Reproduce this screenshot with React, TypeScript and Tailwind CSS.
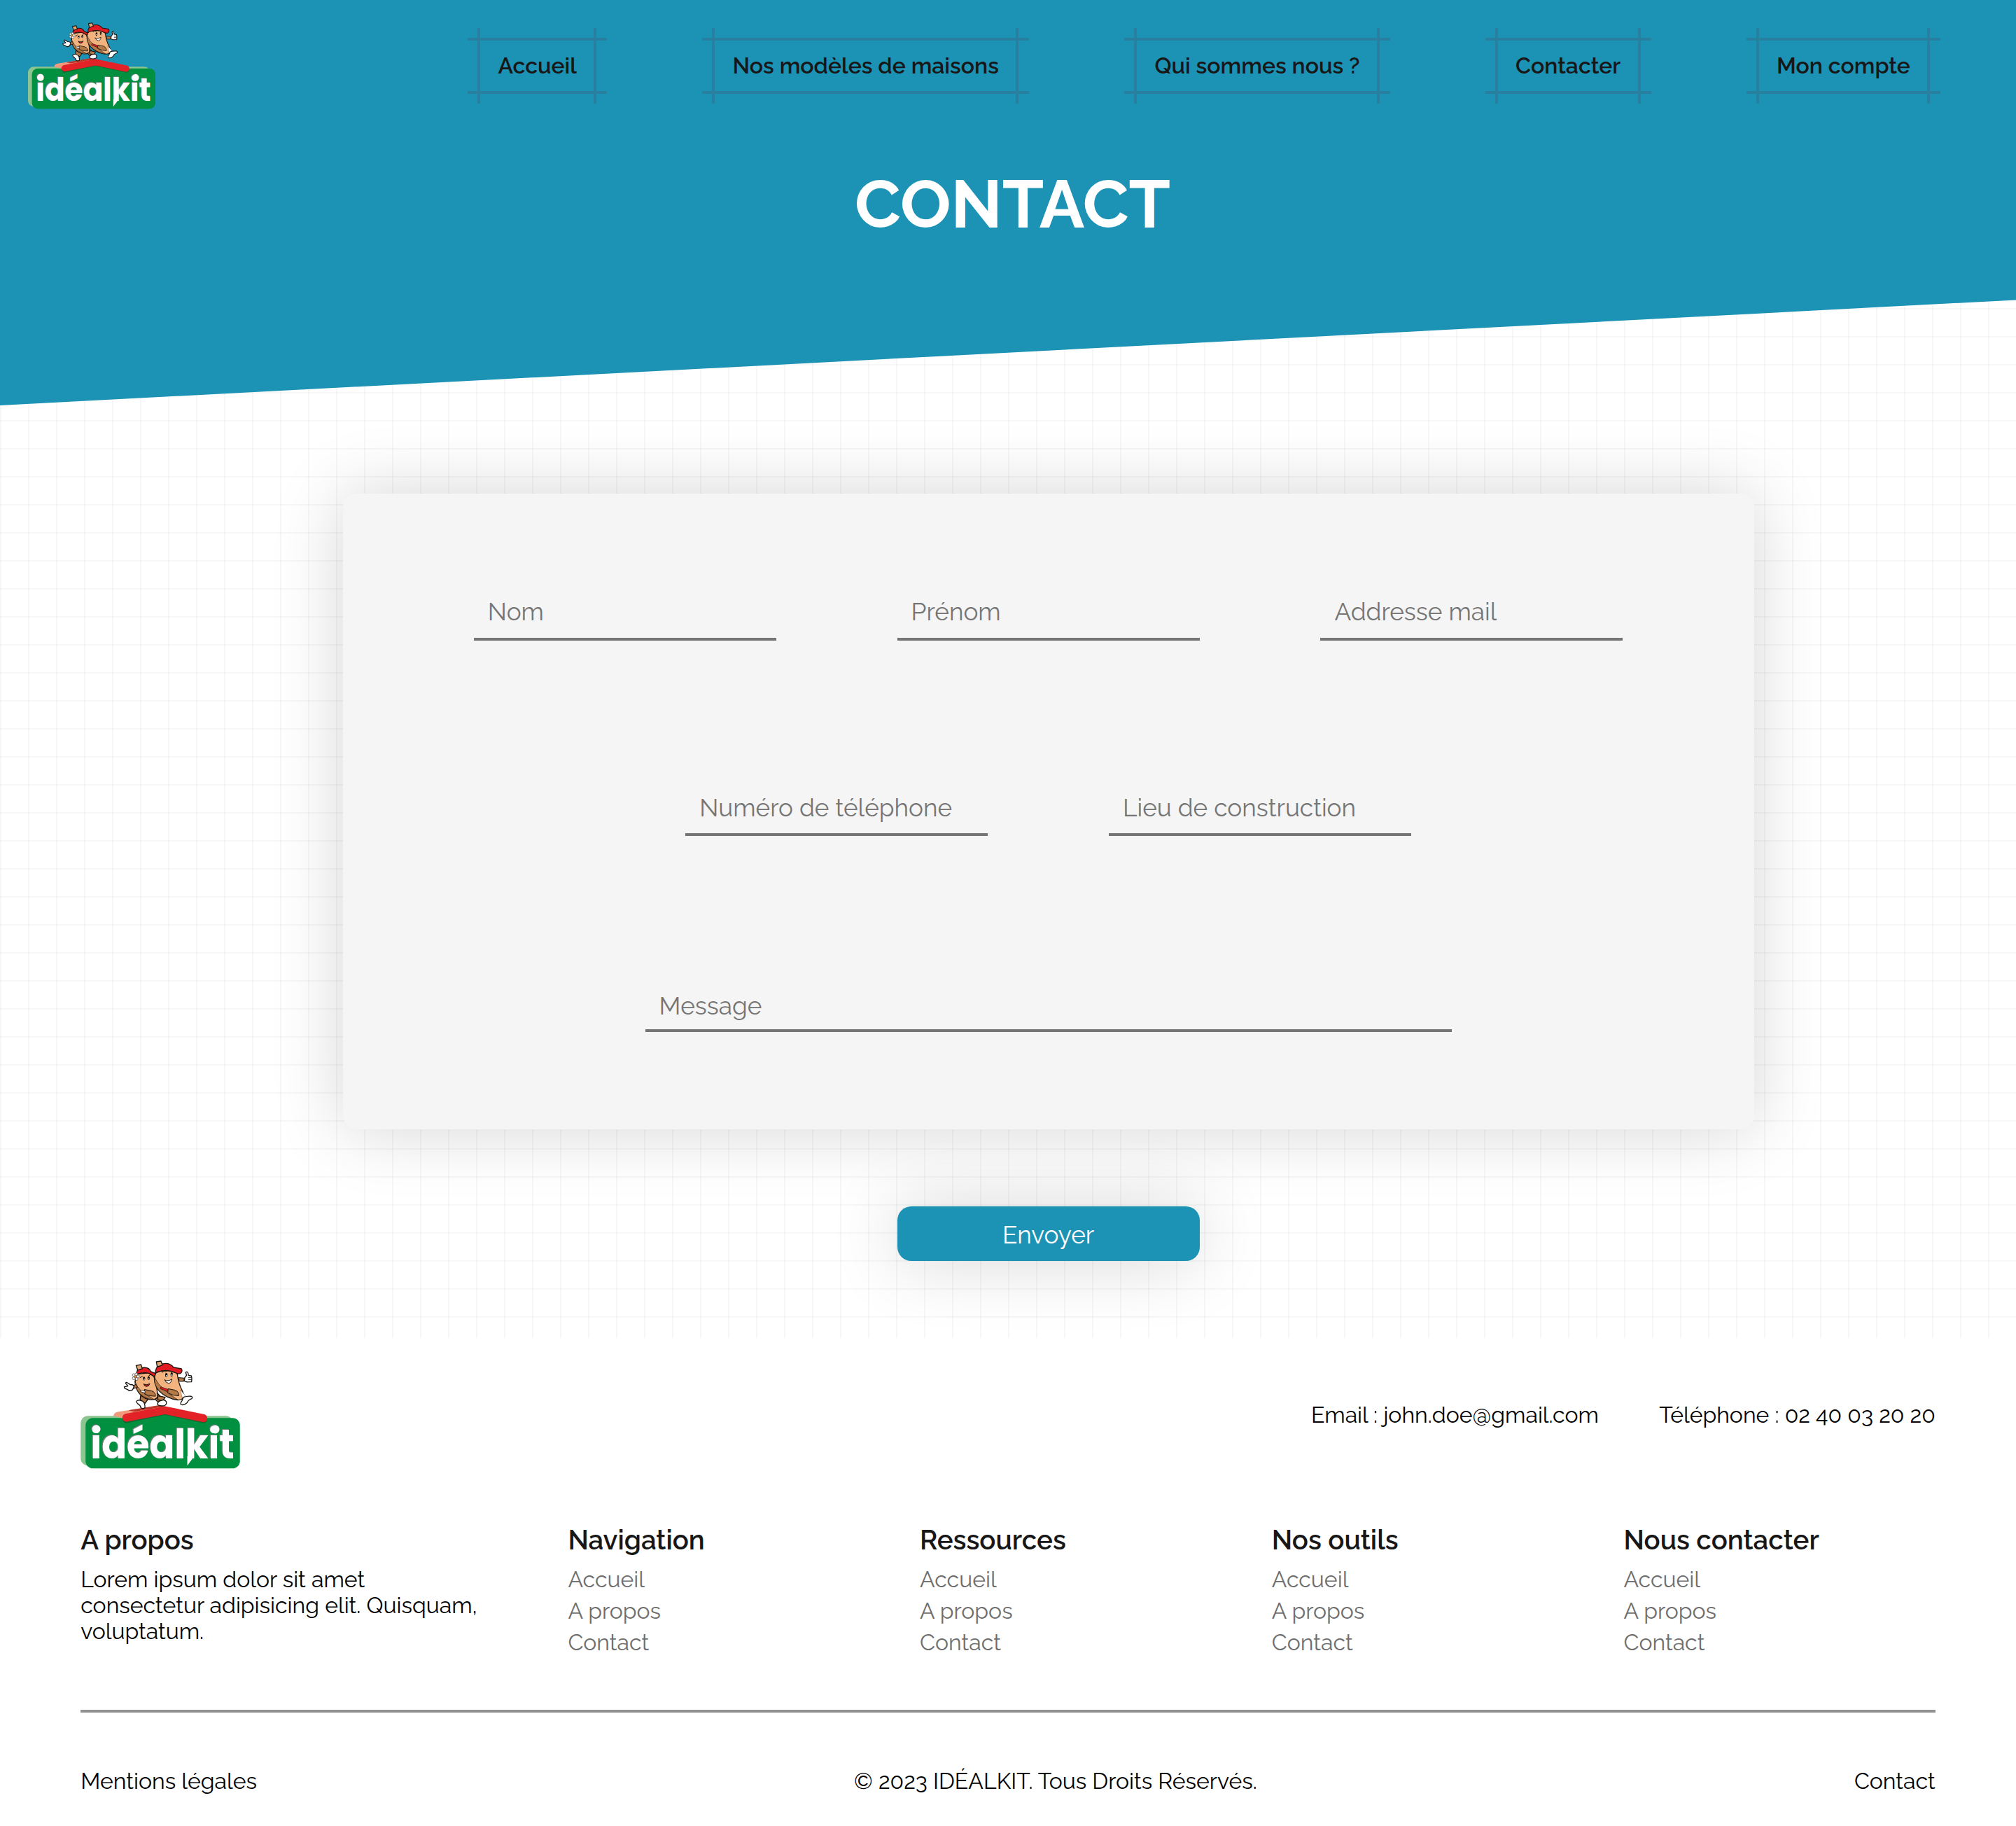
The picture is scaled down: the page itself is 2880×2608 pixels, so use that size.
const navLinks = ["Accueil", "Nos modèles de maisons", "Qui sommes nous ?", "Contacter", "Mon compte"];
const footerColumns = ["Navigation", "Ressources", "Nos outils", "Nous contacter"];
const footerLinks = ["Accueil", "A propos", "Contact"];

function Logo({ className }: { className: string }) {
  return (
    <svg viewBox="45 38 684 466" className={className} role="img" aria-label="idéalkit">
      {/* sign */}
      <rect x="45" y="276" width="655" height="214" rx="32" fill="#8dc591" />
      <rect x="66" y="285" width="663" height="217" rx="32" fill="#00903f" />
      {/* roof */}
      <path d="M186 276 Q188 262 204 259 L385 231 L408 236 L408 250 L226 286 L190 278 Z" fill="#f09a7c" />
      <path d="M250 252 L378 231 L405 236 L275 258 Z" fill="#b5362b" />
      <path d="M290 292 L407 258 L520 292 Z" fill="#00903f" />
      <path d="M240 293 L407 258 L574 293" fill="none" stroke="#0b6b33" strokeWidth="28" strokeLinecap="round" />
      <path d="M241 284 L407 252 L572 286" fill="none" stroke="#e32227" strokeWidth="34" strokeLinecap="round" strokeLinejoin="miter" />

      {/* left character */}
      <g stroke="#17100c" strokeWidth="4" strokeLinejoin="round" strokeLinecap="round">
        <path d="M303 188 L300 208 L322 222 L336 202 Z" fill="#b37a48" />
        <path d="M350 190 L378 218 L398 204 L372 176 Z" fill="#b37a48" />
        <path d="M290 210 Q280 214 290 224 Q303 232 303 241 Q313 248 321 241 Q322 222 312 214 Q300 206 290 210 Z" fill="#fff" />
        <path d="M285 97 Q274 130 284 158 Q300 198 340 206 Q366 210 376 194 Q374 160 366 130 Q360 104 352 90 Z" fill="#f2b37f" />
        <path d="M278 128 Q278 160 302 184 Q330 206 362 206 Q330 190 306 170 Q286 152 278 128 Z" fill="#b37a48" strokeWidth="2" />
        <path d="M320 163 L350 169 Q368 176 366 192 Q340 192 322 184 Z" fill="#b37a48" strokeWidth="3" />
        <path d="M304 166 L322 170 L321 178 L302 172 Z" fill="#fff" strokeWidth="2" />
        <path d="M285 98 Q285 76 306 70 Q338 64 346 86 L366 94 Q372 104 358 106 L340 94 Q314 86 285 98 Z" fill="#e21b23" />
        <path d="M283 60 L304 56 L310 74 L290 80 Z" fill="#e0a878" />
        <path d="M282 142 L264 148 L268 160 L288 154 Z" fill="#b37a48" strokeWidth="3" />
        <path d="M232 152 L248 148 L238 136 Q240 130 246 134 L258 142 Q270 140 274 150 L268 164 Q256 172 248 164 L234 158 Z" fill="#fff" />
        <path d="M316 140 Q328 146 342 138 Q338 150 328 150 Q318 150 316 140 Z" fill="#c41a20" strokeWidth="3" />
        <path d="M310 106 L300 112 M338 104 L346 98" strokeWidth="3" fill="none" />
      </g>
      <g fill="#fff" stroke="#4a3a30" strokeWidth="2">
        <circle cx="273" cy="101" r="6" />
        <circle cx="284" cy="98" r="6" />
        <circle cx="291" cy="107" r="6" />
        <circle cx="285" cy="118" r="6" />
        <circle cx="273" cy="115" r="6" />
        <circle cx="280" cy="108" r="5" fill="#f2a33b" />
      </g>
      <ellipse cx="317" cy="116" rx="5" ry="8" fill="#17100c" />
      <ellipse cx="337" cy="114" rx="5" ry="8" fill="#17100c" />
      <circle cx="318" cy="119" r="2.5" fill="#fff" />
      <circle cx="338" cy="117" r="2.5" fill="#fff" />

      {/* right character */}
      <g stroke="#17100c" strokeWidth="4" strokeLinejoin="round" strokeLinecap="round">
        <path d="M376 190 L376 206 L396 214 L408 196 Z" fill="#b37a48" />
        <path d="M382 214 Q404 202 412 214 Q416 226 406 232 Q386 236 376 228 Q374 220 382 214 Z" fill="#fff" />
        <path d="M367 94 Q354 124 372 156 Q394 190 440 204 Q466 212 480 204 Q492 190 482 170 Q464 136 460 96 Q450 78 380 82 Z" fill="#f2b37f" />
        <path d="M363 112 Q358 140 380 166 Q412 200 462 207 Q424 184 400 160 Q376 140 363 112 Z" fill="#b37a48" strokeWidth="2" />
        <path d="M474 166 L494 188 L484 206 Q478 192 474 166 Z" fill="#fff" strokeWidth="1" />
        <path d="M422 160 L452 166 Q468 174 466 190 Q440 190 420 178 Z" fill="#b37a48" strokeWidth="3" />
        <path d="M390 152 L420 162 L418 172 L388 160 Z" fill="#d81d24" strokeWidth="2" />
        <path d="M486 196 Q502 190 520 192 Q528 196 522 202 Q506 208 502 220 Q490 232 476 228 Q472 220 480 212 Z" fill="#fff" />
        <path d="M366 92 Q366 66 386 56 Q424 42 444 68 L478 74 Q484 84 474 94 Q462 98 450 90 Q410 72 366 92 Z" fill="#e21b23" />
        <path d="M370 44 L390 41 L396 58 L374 66 Z" fill="#e0a878" />
        <path d="M466 112 L490 114 L488 128 L470 128 Z" fill="#b37a48" strokeWidth="3" />
        <path d="M492 112 L500 102 L496 90 Q502 84 506 92 L508 102 L520 104 Q524 112 521 130 L502 131 L490 126 Z" fill="#fff" />
        <path d="M508 111 H520 M508 120 H520" strokeWidth="3" fill="none" />
        <path d="M406 122 Q420 130 437 118 Q434 136 422 136 Q412 136 406 122 Z" fill="#fff" strokeWidth="3" />
        <path d="M392 82 L396 90 L404 82 L410 88 L418 80" strokeWidth="3" fill="none" />
      </g>
      <ellipse cx="413" cy="101" rx="5" ry="9" fill="#17100c" />
      <ellipse cx="436" cy="98" rx="5" ry="9" fill="#17100c" />
      <circle cx="414" cy="104" r="3" fill="#fff" />
      <circle cx="437" cy="101" r="3" fill="#fff" />

      {/* wordmark with its offset shadow */}
      <g className="font-[Poppins,Lato,sans-serif] font-bold" fontSize="172">
        <g fill="#6f7c7a">
          <text x="84" y="455" textLength="617" lengthAdjust="spacingAndGlyphs" aria-hidden="true">
            idéalkit
          </text>
          <circle cx="108" cy="330" r="18" />
          <circle cx="619" cy="331" r="18" />
        </g>
        <g fill="#ffffff">
          <text x="88" y="458" textLength="617" lengthAdjust="spacingAndGlyphs">
            idéalkit
          </text>
          <circle cx="112" cy="333" r="18" />
          <circle cx="623" cy="334" r="18" />
          <path d="M503 450 V490 L528 456 Z" />
        </g>
      </g>
    </svg>
  );
}

function NavLink({ label }: { label: string }) {
  return (
    <a href="#" className="relative flex h-[108px] items-center px-[43.2px] text-[32px] leading-[38px] font-semibold text-[#171717]">
      <span className="absolute top-3.5 left-0 h-1 w-full bg-[#287f9f]" />
      <span className="absolute bottom-3.5 left-0 h-1 w-full bg-[#287f9f]" />
      <span className="absolute top-0 left-3.5 h-full w-1 bg-[#287f9f]" />
      <span className="absolute top-0 right-[15px] h-full w-1 bg-[#287f9f]" />
      <span className="relative whitespace-nowrap">{label}</span>
    </a>
  );
}

function Field({ label, className = "" }: { label: string; className?: string }) {
  return (
    <input
      placeholder={label}
      className={`h-[78px] w-[432px] border-b-4 border-[#757575] bg-transparent px-5 text-[35.2px] leading-[42px] outline-none placeholder:text-[#757575] placeholder:opacity-100 ${className}`}
    />
  );
}

export default function App() {
  return (
    <div className="min-h-[2608px] w-[2880px] bg-white font-[Raleway,Lato,sans-serif] text-black">
      <div className="h-[1911px] overflow-hidden bg-[linear-gradient(to_right,rgba(0,0,0,0.03)_2px,transparent_2px),linear-gradient(to_bottom,rgba(0,0,0,0.03)_2px,transparent_2px)] bg-[size:40px_40px]">
        <header className="h-[579px] bg-[#1c92b5] [clip-path:polygon(0_0,100%_0,100%_74%,0_100%)]">
          <div className="flex h-[188px] items-center justify-between pr-[108px] pl-10">
            <Logo className="h-[124px] w-[182px] overflow-visible" />
            <nav className="flex gap-[136.2px]">
              {navLinks.map((label) => (
                <NavLink key={label} label={label} />
              ))}
            </nav>
          </div>
          <h1 className="mt-[47px] pl-[13px] text-center text-8xl leading-[112px] font-bold text-white">CONTACT</h1>
        </header>

        <form className="ml-[489.6px] flex w-[2016px] flex-col items-center pt-[126px]">
          <div className="flex h-[908px] w-full flex-col items-center rounded-[20px] bg-[#f5f5f5] pt-[132px] shadow-[0_0_100px_rgba(0,0,0,0.17)]">
            <div className="flex gap-[172.8px]">
              <Field label="Nom" className="pb-px" />
              <Field label="Prénom" className="pb-px" />
              <Field label="Addresse mail" className="pb-px" />
            </div>
            <div className="mt-[201px] flex gap-[172.8px]">
              <Field label="Numéro de téléphone" />
              <Field label="Lieu de construction" />
            </div>
            <input
              placeholder="Message"
              className="mt-[209px] h-[71px] w-[1152px] border-b-4 border-[#757575] bg-transparent px-5 text-[35.2px] leading-[42px] outline-none placeholder:text-[#757575] placeholder:opacity-100"
            />
          </div>
          <button
            type="button"
            className="mt-[110px] h-[78px] w-[432px] rounded-[20px] bg-[#1c92b5] pt-[3px] text-[35.2px] leading-[42px] text-white shadow-[0_0_100px_rgba(0,0,0,0.17)]"
          >
            Envoyer
          </button>
        </form>
      </div>

      <footer className="px-[115.2px] pt-8 text-[32px] leading-[37px]">
        <div className="flex h-[155px] items-center justify-between">
          <Logo className="h-[155px] w-[228px] overflow-visible" />
          <div className="flex gap-[86.4px]">
            <span>Email : john.doe@gmail.com</span>
            <span>Téléphone : 02 40 03 20 20</span>
          </div>
        </div>

        <div className="mt-[79px] grid grid-cols-[696.2px_502.7px_502.7px_502.7px_1fr]">
          <div>
            <h2 className="text-[38.4px] leading-[46px] font-semibold text-[#171717]">A propos</h2>
            <p className="mt-3.5 w-[582px]">Lorem ipsum dolor sit amet consectetur adipisicing elit. Quisquam, voluptatum.</p>
          </div>
          {footerColumns.map((title) => (
            <div key={title}>
              <h2 className="text-[38.4px] leading-[46px] font-semibold text-[#171717]">{title}</h2>
              <ul className="mt-3.5 flex flex-col gap-2 text-[#6e6e6e]">
                {footerLinks.map((link) => (
                  <li key={link}>
                    <a href="#">{link}</a>
                  </li>
                ))}
              </ul>
            </div>
          ))}
        </div>

        <div className="mt-[78px] h-1 bg-[#919191]" />

        <div className="mt-[79px] flex justify-between">
          <span>Mentions légales</span>
          <span>© 2023 IDÉALKIT. Tous Droits Réservés.</span>
          <span>Contact</span>
        </div>
      </footer>
    </div>
  );
}
